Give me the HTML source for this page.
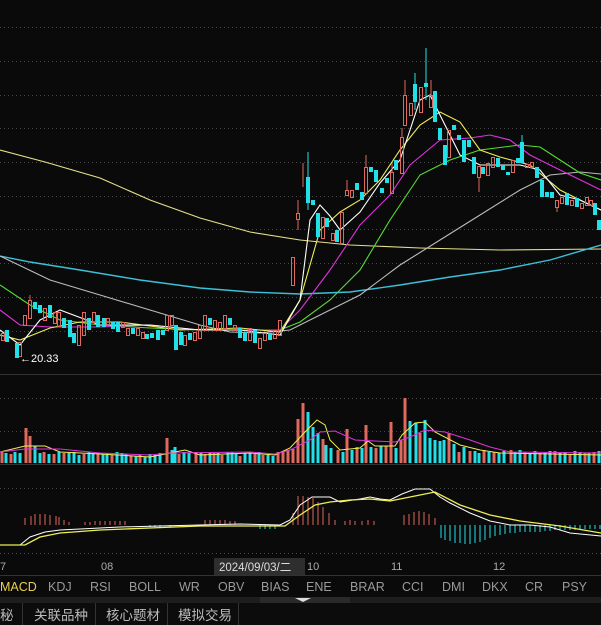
<!DOCTYPE html>
<html><head><meta charset="utf-8"><style>
html,body{margin:0;padding:0;background:#0a0a0a;width:601px;height:625px;overflow:hidden}
svg{display:block}
text{font-family:"Liberation Sans","Noto Sans CJK SC",sans-serif}
</style></head><body>
<svg width="601" height="625" viewBox="0 0 601 625" xmlns="http://www.w3.org/2000/svg">
<rect width="601" height="625" fill="#0a0a0a"/>
<g stroke="#4a4a4a" stroke-dasharray="1 3" stroke-width="1">
<line x1="0" y1="27.5" x2="601" y2="27.5"/><line x1="0" y1="61.5" x2="601" y2="61.5"/><line x1="0" y1="95.5" x2="601" y2="95.5"/><line x1="0" y1="128.5" x2="601" y2="128.5"/><line x1="0" y1="162.5" x2="601" y2="162.5"/><line x1="0" y1="196.5" x2="601" y2="196.5"/><line x1="0" y1="229.5" x2="601" y2="229.5"/><line x1="0" y1="263.5" x2="601" y2="263.5"/><line x1="0" y1="297.5" x2="601" y2="297.5"/><line x1="0" y1="331.5" x2="601" y2="331.5"/>
<line x1="0" y1="398.5" x2="601" y2="398.5"/><line x1="0" y1="431.5" x2="601" y2="431.5"/>
<line x1="0" y1="488.5" x2="601" y2="488.5"/><line x1="0" y1="553.5" x2="601" y2="553.5"/>
</g>
<line x1="0" y1="374.5" x2="601" y2="374.5" stroke="#333"/>
<line x1="0" y1="464.5" x2="601" y2="464.5" stroke="#333"/>
<g fill="none" stroke-width="1.1">
<polyline stroke="#e8e08a" points="0,150 45,162 100,178 150,200 200,218 250,232 300,240 350,245 420,248 500,250 601,249"/>
<polyline stroke="#3cc0d8" stroke-width="1.4" points="0,256 30,262 80,270 140,280 200,288 250,292 300,294 350,292 400,285 450,277 500,270 550,260 601,245"/>
<polyline stroke="#bbbbbb" points="0,256 50,280 100,295 150,310 200,325 230,332 260,333 290,330 320,315 360,295 400,265 440,240 480,215 520,190 550,175 580,172 601,174"/>
<polyline stroke="#55dd33" points="0,285 30,305 60,320 100,325 150,328 200,330 250,330 280,330 300,322 330,300 360,270 390,220 420,175 450,160 480,150 520,145 540,147 560,160 580,173 601,180"/>
<polyline stroke="#dd33dd" points="0,310 20,325 50,327 100,327 150,325 200,330 250,330 280,330 300,310 330,270 360,225 390,195 410,165 440,140 470,138 490,135 510,140 530,155 560,170 601,190"/>
<polyline stroke="#eeee55" points="0,335 20,340 50,328 80,322 120,322 180,330 240,328 280,332 300,300 320,230 340,212 360,200 380,180 400,150 420,125 440,112 460,122 480,150 500,157 530,165 560,190 590,205 601,210"/>
<polyline stroke="#ffffff" points="0,330 20,345 40,320 60,310 100,325 150,325 200,330 240,330 280,335 300,300 310,220 320,205 330,216 340,230 360,212 380,183 400,160 410,130 420,100 430,95 440,115 460,155 480,165 500,165 520,165 540,170 560,195 580,200 601,210"/>
</g>
<g fill="none" stroke="#e0685c" stroke-width="1">
<rect x="1.5" y="333.5" width="3" height="7"/><rect x="18.5" y="342.5" width="3" height="14"/><rect x="23.5" y="315.5" width="3" height="10"/><rect x="28.5" y="300.5" width="3" height="18"/><rect x="43.5" y="308.5" width="3" height="12"/><rect x="53.5" y="312.5" width="3" height="11"/><rect x="57.5" y="312.5" width="3" height="14"/><rect x="77.5" y="325.5" width="3" height="20"/><rect x="82.5" y="312.5" width="3" height="23"/><rect x="92.5" y="312.5" width="3" height="10"/><rect x="106.5" y="318.5" width="3" height="7"/><rect x="121.5" y="322.5" width="3" height="5"/><rect x="126.5" y="328.5" width="3" height="7"/><rect x="136.5" y="328.5" width="3" height="7"/><rect x="141.5" y="332.5" width="3" height="6"/><rect x="165.5" y="315.5" width="3" height="15"/><rect x="170.5" y="315.5" width="3" height="10"/><rect x="183.5" y="335.5" width="3" height="10"/><rect x="193.5" y="332.5" width="3" height="8"/><rect x="198.5" y="325.5" width="3" height="13"/><rect x="203.5" y="315.5" width="3" height="15"/><rect x="213.5" y="320.5" width="3" height="10"/><rect x="218.5" y="322.5" width="3" height="8"/><rect x="223.5" y="315.5" width="3" height="13"/><rect x="233.5" y="325.5" width="3" height="5"/><rect x="248.5" y="328.5" width="3" height="12"/><rect x="258.5" y="338.5" width="3" height="10"/><rect x="263.5" y="333.5" width="3" height="7"/><rect x="273.5" y="330.5" width="3" height="8"/><rect x="278.5" y="320.5" width="3" height="15"/>
<rect x="291.5" y="257.5" width="3" height="28"/><rect x="296.5" y="213.5" width="3" height="6"/><rect x="321.5" y="217.5" width="3" height="21"/><rect x="331.5" y="233.5" width="3" height="7"/><rect x="340.5" y="212.5" width="3" height="31"/><rect x="345.5" y="190.5" width="3" height="5"/><rect x="350.5" y="190.5" width="3" height="7"/><rect x="364.5" y="167.5" width="3" height="26"/><rect x="390.5" y="172.5" width="3" height="21"/><rect x="400.5" y="137.5" width="3" height="36"/><rect x="403.5" y="95.5" width="3" height="30"/><rect x="409.5" y="103.5" width="3" height="12"/><rect x="419.5" y="87.5" width="3" height="25"/><rect x="429.5" y="95.5" width="3" height="12"/><rect x="447.5" y="130.5" width="3" height="27"/><rect x="477.5" y="166.5" width="3" height="11"/><rect x="486.5" y="163.5" width="3" height="12"/><rect x="491.5" y="157.5" width="3" height="10"/><rect x="511.5" y="160.5" width="3" height="12"/><rect x="525.5" y="164.5" width="3" height="3"/><rect x="530.5" y="162.5" width="3" height="5"/><rect x="555.5" y="200.5" width="3" height="7"/><rect x="560.5" y="197.5" width="3" height="6"/><rect x="570.5" y="200.5" width="3" height="5"/><rect x="580.5" y="203.5" width="3" height="5"/><rect x="585.5" y="197.5" width="3" height="8"/><rect x="589.5" y="200.5" width="3" height="5"/>
<path d="M30 295V300M298 200V213M298 219V230M303 163V187M347 180V190M366 155V167M392 163V172M402 128V137M405 80V95M431 80V95M479 177V192M557 207V212"/>
</g>
<g fill="#22e0e8">
<rect x="5" y="330" width="4" height="12"/><rect x="15" y="343" width="4" height="15"/><rect x="33" y="302" width="4" height="7"/><rect x="38" y="305" width="4" height="8"/><rect x="48" y="305" width="4" height="13"/><rect x="62" y="318" width="4" height="10"/><rect x="68" y="320" width="4" height="17"/><rect x="72" y="333" width="4" height="10"/><rect x="87" y="318" width="4" height="12"/><rect x="96" y="315" width="4" height="12"/><rect x="102" y="318" width="4" height="9"/><rect x="111" y="322" width="4" height="7"/><rect x="116" y="322" width="4" height="10"/><rect x="131" y="328" width="4" height="6"/><rect x="145" y="334" width="4" height="5"/><rect x="150" y="333" width="4" height="5"/><rect x="156" y="330" width="4" height="10"/><rect x="161" y="330" width="4" height="5"/><rect x="174" y="325" width="4" height="25"/><rect x="179" y="332" width="4" height="13"/><rect x="188" y="333" width="4" height="7"/><rect x="208" y="318" width="4" height="7"/><rect x="228" y="318" width="4" height="7"/><rect x="238" y="328" width="4" height="10"/><rect x="243" y="332" width="4" height="9"/><rect x="253" y="330" width="4" height="13"/><rect x="268" y="333" width="4" height="7"/>
<rect x="306" y="177" width="4" height="26"/><rect x="311" y="200" width="4" height="5"/><rect x="316" y="213" width="4" height="24"/><rect x="325" y="218" width="4" height="9"/><rect x="335" y="230" width="4" height="12"/><rect x="355" y="183" width="4" height="7"/><rect x="360" y="192" width="4" height="8"/><rect x="369" y="167" width="4" height="5"/><rect x="374" y="170" width="4" height="12"/><rect x="380" y="188" width="4" height="5"/><rect x="385" y="178" width="4" height="5"/><rect x="394" y="160" width="4" height="10"/><rect x="413" y="84" width="4" height="18"/><rect x="424" y="83" width="4" height="4"/><rect x="433" y="91" width="4" height="31"/><rect x="438" y="128" width="4" height="12"/><rect x="443" y="145" width="4" height="20"/><rect x="452" y="125" width="4" height="5"/><rect x="457" y="135" width="4" height="5"/><rect x="462" y="140" width="4" height="22"/><rect x="467" y="140" width="4" height="7"/><rect x="472" y="157" width="4" height="17"/><rect x="481" y="167" width="4" height="7"/><rect x="496" y="158" width="4" height="9"/><rect x="501" y="165" width="4" height="5"/><rect x="506" y="172" width="4" height="3"/><rect x="516" y="158" width="4" height="5"/><rect x="520" y="142" width="4" height="21"/><rect x="535" y="167" width="4" height="11"/><rect x="540" y="180" width="4" height="17"/><rect x="545" y="192" width="4" height="5"/><rect x="550" y="192" width="4" height="6"/><rect x="565" y="193" width="4" height="12"/><rect x="575" y="198" width="4" height="9"/><rect x="593" y="203" width="4" height="12"/><rect x="597" y="220" width="4" height="10"/>
<path d="M308 152V210M415 73V110M426 48V100M522 135V142" fill="none" stroke="#22e0e8" stroke-width="1"/>
</g>
<text x="20" y="362" fill="#fff" font-size="11">←20.33</text>
<path fill="none" stroke="#e0685c" stroke-width="3" d="M2 463V452M11 463V454M26 463V428M30 463V436M44 463V452M54 463V454M64 463V453M84 463V454M98 463V453M112 463V455M131 463V456M140 463V455M167 463V438M179 463V454M196 463V452M205 463V454M214 463V453M222 463V455M240 463V456M255 463V454M263 463V455M278 463V452M283 463V451M288 463V450M293 463V449M298 463V419M303 463V403M323 463V439M338 463V450M347 463V429M357 463V447M366 463V425M376 463V448M386 463V446M391 463V422M401 463V440M405 463V398M420 463V433M449 463V433M459 463V452M470 463V451M484 463V450M494 463V452M511 463V450M525 463V452M540 463V453M555 463V451M570 463V454M585 463V453M594 463V452"/>
<path fill="none" stroke="#22e0e8" stroke-width="3" d="M6 463V453M15 463V452M20 463V453M35 463V446M40 463V453M49 463V454M59 463V452M69 463V453M74 463V452M79 463V455M89 463V452M93 463V453M103 463V454M107 463V453M117 463V452M122 463V453M126 463V454M136 463V456M145 463V457M150 463V454M155 463V455M160 463V453M172 463V450M175 463V447M184 463V452M189 463V453M201 463V453M210 463V452M218 463V453M228 463V452M232 463V452M236 463V454M245 463V453M250 463V453M259 463V452M268 463V455M273 463V456M308 463V412M313 463V427M318 463V433M326 463V445M331 463V448M343 463V452M352 463V450M362 463V448M371 463V447M381 463V446M396 463V448M410 463V421M416 463V423M425 463V420M430 463V438M435 463V440M440 463V441M444 463V440M454 463V444M464 463V447M475 463V451M479 463V453M489 463V452M499 463V453M504 463V451M515 463V452M520 463V450M530 463V453M535 463V451M545 463V452M550 463V451M560 463V453M565 463V452M575 463V451M580 463V452M589 463V453M599 463V451"/>
<g fill="none" stroke-width="1">
<polyline stroke="#eeee55" points="0,452 25,446 45,446 60,452 100,454 150,457 170,453 185,450 200,455 250,453 275,455 290,448 305,432 317,420 325,425 330,440 340,450 360,448 368,441 375,446 395,446 402,435 415,423 425,422 435,432 460,445 480,450 500,453 601,455"/>
<polyline stroke="#dd33dd" points="0,452 25,449 60,449 100,453 150,455 170,453 250,452 275,454 290,450 310,440 320,432 335,431 355,440 395,442 410,437 425,430 445,432 470,440 490,447 510,452 601,453"/>
</g>
<path fill="none" stroke="#e0685c" stroke-width="1" d="M25 525V518M31 525V516M35 525V514M40 525V514M45 525V514M50 525V515M56 525V516M59 525V517M64 525V520M69 525V522M85 525V522M90 525V522M95 525V521M100 525V521M105 525V521M110 525V521M115 525V521M120 525V521M125 525V521M205 525V520M210 525V520M215 525V520M220 525V520M225 525V520M230 525V521M235 525V521M293 525V513M298 525V496M303 525V496M308 525V497M313 525V498M318 525V502M323 525V507M329 525V513M335 525V520M345 525V521M350 525V520M355 525V521M362 525V521M368 525V520M374 525V521M404 525V515M409 525V514M414 525V512M419 525V511M424 525V512M429 525V514M435 525V518"/>
<path fill="none" stroke="#22e0e8" stroke-width="1" d="M441 525V538M445 525V540M450 525V541M455 525V543M460 525V543M465 525V544M470 525V544M475 525V543M480 525V542M485 525V540M490 525V538M495 525V536M500 525V535M505 525V534M510 525V533M515 525V533M520 525V532M525 525V532M530 525V532M535 525V532M540 525V532M545 525V531M550 525V531M555 525V530M560 525V530M565 525V530M570 525V530M575 525V530M580 525V529M585 525V529M590 525V529M595 525V529M600 525V529M150 525V527M155 525V527M160 525V527M170 525V527M260 525V529M265 525V529M270 525V529M275 525V529"/>
<polyline fill="none" stroke="#fff" points="0,545 20,545 30,537 45,532 60,530 80,529 120,527 160,526 200,525 240,524 280,525 290,520 300,505 312,497 330,497 340,502 360,499 370,497 380,499 390,500 402,494 415,489 430,489 440,497 450,503 470,513 490,521 510,525 530,525 550,527 570,533 601,536"/>
<polyline fill="none" stroke="#eeee55" stroke-width="1.3" points="0,545 25,545 40,537 60,533 100,530 150,528 200,526 240,526 285,526 300,515 315,505 330,502 350,500 370,499 390,501 410,497 425,494 435,492 460,505 490,515 520,521 560,526 601,533"/>
<g fill="#aaa" font-size="11">
<text x="0" y="570">7</text><text x="101" y="570">08</text><text x="307" y="570">10</text><text x="391" y="570">11</text><text x="493" y="570">12</text>
</g>
<rect x="214" y="558" width="91" height="17" fill="#2e2e2e"/>
<text x="219" y="571" fill="#ddd" font-size="11.5">2024/09/03/二</text>
<line x1="0" y1="575.5" x2="601" y2="575.5" stroke="#333"/>
<g fill="#9a9a9a" font-size="12.5">
<text x="0" y="591" fill="#e8d050">MACD</text><text x="48" y="591">KDJ</text><text x="90" y="591">RSI</text><text x="129" y="591">BOLL</text><text x="179" y="591">WR</text><text x="218" y="591">OBV</text><text x="261" y="591">BIAS</text><text x="306" y="591">ENE</text><text x="350" y="591">BRAR</text><text x="402" y="591">CCI</text><text x="442" y="591">DMI</text><text x="482" y="591">DKX</text><text x="525" y="591">CR</text><text x="562" y="591">PSY</text>
</g>
<rect x="0" y="597" width="601" height="6" fill="#1e1e1e"/>
<rect x="260" y="597" width="90" height="6" fill="#2a2a2a"/>
<path d="M295 598H311L303 602Z" fill="#ddd"/>
<rect x="0" y="603" width="601" height="22" fill="#0c0c0c"/>
<g stroke="#333"><line x1="22.5" y1="603" x2="22.5" y2="625"/><line x1="95.5" y1="603" x2="95.5" y2="625"/><line x1="167.5" y1="603" x2="167.5" y2="625"/><line x1="238.5" y1="603" x2="238.5" y2="625"/></g>
<g fill="#bbb" font-size="13.5">
<text x="0" y="620">秘</text><text x="34" y="620">关联品种</text><text x="106" y="620">核心题材</text><text x="178" y="620">模拟交易</text>
</g>
</svg>
</body></html>
